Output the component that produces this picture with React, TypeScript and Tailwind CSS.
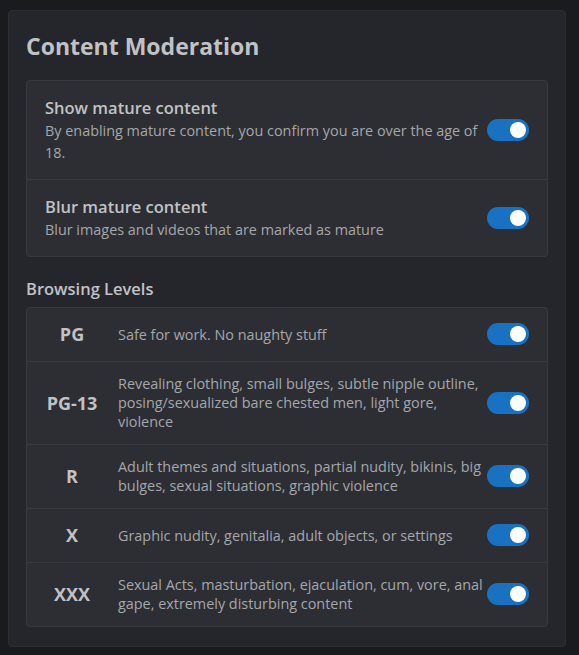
// Content moderation settings card: mature-content switches and browsing levels.
import { useState } from 'react';

const FONT = { fontFamily: '"Open Sans", "Noto Sans", sans-serif' };

type Level = { key: string; label: string; description: string };

const LEVELS: Level[] = [
  { key: 'pg', label: 'PG', description: 'Safe for work. No naughty stuff' },
  {
    key: 'pg13',
    label: 'PG-13',
    description: 'Revealing clothing, small bulges, subtle nipple outline, posing/sexualized bare chested men, light gore, violence',
  },
  {
    key: 'r',
    label: 'R',
    description: 'Adult themes and situations, partial nudity, bikinis, big bulges, sexual situations, graphic violence',
  },
  { key: 'x', label: 'X', description: 'Graphic nudity, genitalia, adult objects, or settings' },
  {
    key: 'xxx',
    label: 'XXX',
    description: 'Sexual Acts, masturbation, ejaculation, cum, vore, anal gape, extremely disturbing content',
  },
];

function Toggle({ checked, onChange }: { checked: boolean; onChange: (value: boolean) => void }) {
  return (
    <button
      type="button"
      role="switch"
      aria-checked={checked}
      onClick={() => onChange(!checked)}
      className={`flex h-[22px] w-[42px] shrink-0 items-center rounded-full px-[3px] ${
        checked ? 'justify-end bg-[#1971c2]' : 'justify-start bg-[#373a40]'
      }`}
    >
      <span className="h-4 w-4 rounded-full bg-white" />
    </button>
  );
}

export default function App() {
  const [showMature, setShowMature] = useState(true);
  const [blurMature, setBlurMature] = useState(true);
  const [levels, setLevels] = useState<Record<string, boolean>>({
    pg: true,
    pg13: true,
    r: true,
    x: true,
    xxx: true,
  });

  return (
    <div className="min-h-screen bg-[#1a1b1e] py-[10px] pl-2 pr-[13px]" style={FONT}>
      <div className="rounded border border-[#2c2e33] bg-[#25262b] px-[17px] pb-[19px] pt-[20px]">
        <h2 className="text-[23px] font-bold leading-[30px] text-[#c1c2c5]">Content Moderation</h2>

        <div className="mt-[19px] rounded border border-[#373a40] bg-[#2c2e33]">
          <div className="flex items-center px-[18px] pb-[15px] pt-[15px]">
            <div className="flex-1">
              <p className="text-[16.5px] font-semibold leading-6 text-[#c1c2c5]">Show mature content</p>
              <p className="text-[14.4px] leading-[22px] text-[#a6a7ab]">
                By enabling mature content, you confirm you are over the age of 18.
              </p>
            </div>
            <Toggle checked={showMature} onChange={setShowMature} />
          </div>
          <div className="flex items-center border-t border-[#373a40] px-[18px] pb-[15px] pt-[15px]">
            <div className="flex-1">
              <p className="text-[16.5px] font-semibold leading-6 text-[#c1c2c5]">Blur mature content</p>
              <p className="text-[14.4px] leading-[22px] text-[#a6a7ab]">
                Blur images and videos that are marked as mature
              </p>
            </div>
            <Toggle checked={blurMature} onChange={setBlurMature} />
          </div>
        </div>

        <h3 className="mt-[20px] text-[16.5px] font-semibold leading-6 text-[#c1c2c5]">Browsing Levels</h3>

        <div className="mt-[6px] rounded border border-[#373a40] bg-[#2c2e33]">
          {LEVELS.map((level, index) => (
            <div
              key={level.key}
              className={`flex items-center pb-[13px] pl-4 pr-[18px] pt-[12px] ${
                index > 0 ? 'border-t border-[#373a40]' : ''
              }`}
            >
              <span className="mr-[17px] w-[58px] shrink-0 text-center text-lg font-bold leading-7 text-[#c1c2c5]">
                {level.label}
              </span>
              <p className="flex-1 text-[14.4px] leading-[19px] text-[#a6a7ab]">{level.description}</p>
              <Toggle
                checked={levels[level.key]}
                onChange={(value) => setLevels((prev) => ({ ...prev, [level.key]: value }))}
              />
            </div>
          ))}
        </div>
      </div>
    </div>
  );
}
